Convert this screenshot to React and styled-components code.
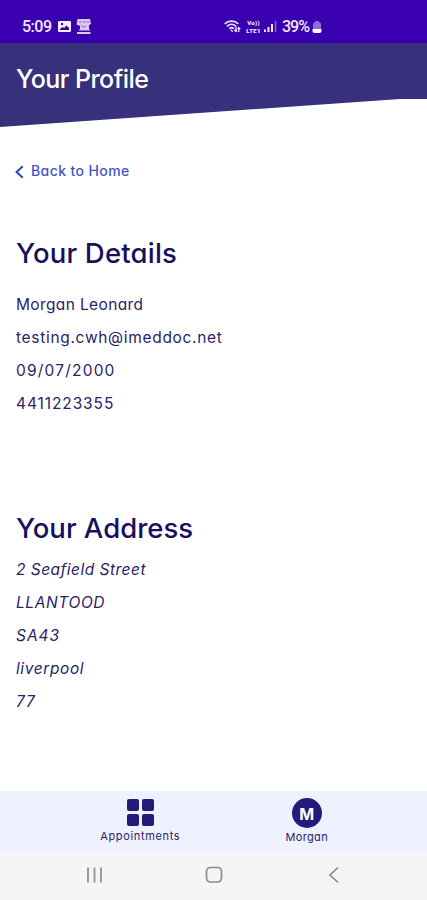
import React from 'react';
import styled, { createGlobalStyle } from 'styled-components';

const GlobalStyle = createGlobalStyle`
  * {
    box-sizing: border-box;
  }

  body {
    margin: 0;
    background: #ffffff;
    font-family: Inter, 'Open Sans', sans-serif;
    font-feature-settings: 'cv11';
    color: #2a2368;
  }

  h1, h2, p, address {
    margin: 0;
  }
`;

const Screen = styled.div`
  display: flex;
  flex-direction: column;
  width: 100%;
  height: 900px;
  overflow: hidden;
  background: #ffffff;
`;

const StatusBar = styled.div`
  display: flex;
  align-items: center;
  justify-content: space-between;
  flex: none;
  height: 43px;
  padding: 10px 105px 0 22px;
  background: #3a00b0;
  color: #f1e9ff;
  font-family: Roboto, sans-serif;
  font-size: 16px;
  font-weight: 500;
  line-height: 20px;

  svg {
    display: block;
    flex: none;
  }
`;

const StatusGroup = styled.div`
  display: flex;
  align-items: center;
  gap: ${({ $gap }) => $gap}px;
`;

const Clock = styled.span`
  width: 31px;
  letter-spacing: -0.5px;
  white-space: nowrap;
`;

const BatteryText = styled.span`
  width: 29px;
  margin-left: 4px;
  letter-spacing: -1px;
  white-space: nowrap;
`;

const Header = styled.header`
  flex: none;
  height: 84px;
  padding: 20px 16px 0;
  background: #37317b;
  clip-path: polygon(0 0, 100% 0, 100% 56px, 400px 56px, 0 100%);
`;

const HeaderTitle = styled.h1`
  font-size: 25px;
  font-weight: 450;
  line-height: 32px;
  letter-spacing: -0.55px;
  color: #ffffff;
`;

const Content = styled.main`
  flex: 1;
  padding: 34px 16px 0 15px;
`;

const BackLink = styled.a`
  display: flex;
  align-items: center;
  gap: 7px;
  height: 20px;
  color: #4154c8;
  font-size: 14px;
  font-weight: 450;
  line-height: 20px;
  letter-spacing: 0.4px;

  svg {
    margin-top: 2px;
  }
`;

const Section = styled.section`
  margin-top: ${({ $top }) => $top}px;
  padding-left: 1px;
`;

const SectionTitle = styled.h2`
  margin-bottom: ${({ $gap }) => $gap}px;
  font-size: 27.5px;
  font-weight: 450;
  line-height: 36px;
  letter-spacing: ${({ $spacing }) => $spacing}px;
  color: #17105f;
`;

const Line = styled.p`
  font-size: 15.5px;
  line-height: 33px;
  letter-spacing: ${({ $spacing }) => $spacing || 0}px;
`;

const Address = styled.address`
  font-style: italic;
`;

const TabBar = styled.nav`
  display: flex;
  flex: none;
  height: 61px;
  padding: 0 37px 0 57px;
  background: #eef1fe;
`;

const Tab = styled.div`
  display: flex;
  flex: 1;
  flex-direction: column;
  align-items: center;
  padding-top: ${({ $top }) => $top}px;
`;

const TabLabel = styled.span`
  margin-top: ${({ $top }) => $top}px;
  font-size: 11px;
  line-height: 14px;
  letter-spacing: ${({ $spacing }) => $spacing}px;
`;

const TileGrid = styled.div`
  display: grid;
  grid-template-columns: 12px 12px;
  grid-auto-rows: 12px;
  gap: 3px;

  span {
    border-radius: 2px;
    background: #231a79;
  }
`;

const Avatar = styled.div`
  display: flex;
  align-items: center;
  justify-content: center;
  width: 30px;
  height: 30px;
  padding-top: 2px;
  border-radius: 50%;
  background: #231a79;
  color: #ffffff;
  font-size: 16px;
  font-weight: 700;
`;

const SystemBar = styled.div`
  display: flex;
  align-items: center;
  justify-content: space-between;
  flex: none;
  height: 48px;
  padding: 0 84px 2px;
  background: #f5f5f5;
`;

const PictureIcon = () => (
  <svg width="13" height="13" viewBox="0 0 13 13">
    <path fill="#f7f0ff" fillRule="evenodd" d="M1.3 1h10.400A1.3 1.3 0 0 1 13 2.300v8.400a1.3 1.3 0 0 1-1.300 1.300H1.300A1.3 1.3 0 0 1 0 10.700V2.300A1.3 1.3 0 0 1 1.300 1ZM2 10h9V8L8.500 5.500 6 8 4.500 7 2 9ZM3 3v2h2V3Z" />
  </svg>
);

const StoreIcon = () => (
  <svg width="16" height="16" viewBox="0 0 16 16" fill="#dfc8f5">
    <path d="M1.500 0h12.500l1 5-2 1v3.500l1 2H3l1-2V7L.5 5.500Z" />
    <path d="M1 13h13.500v2H1Z" />
    <path d="M3 3h2.500M7 3h2.500M11 3h2M5.500 6.500l2.500 2 2-2" stroke="#7a4cc8" fill="none" />
  </svg>
);

const WifiIcon = () => (
  <svg width="17" height="15" viewBox="0 0 17 15" fill="none" stroke="#eee3ff" strokeWidth="1.6">
    <path d="M.7 4.800C4.500 1.200 10.500 1.200 14.300 4.800M3 7.300c2.700-2.500 6.300-2.500 9 0M5.300 9.600c1.500-1.300 3-1.300 4.500 0" />
    <path d="M6.600 10.600 8.800 12.800M12 7.500v5m-1.700-1.700L12 12.500l1-1M14.700 13V8.500m-1 1.500 1-1.500 1.500 1.700" strokeWidth="1.3" />
  </svg>
);

const LteText = styled.div`
  display: flex;
  flex-direction: column;
  align-items: center;
  width: 17px;
  margin: 0 1px 0 3px;
  font-size: 6px;
  font-weight: 900;
  line-height: 7.5px;
  letter-spacing: 0.3px;
  white-space: nowrap;
`;

const SignalIcon = () => (
  <svg width="13" height="13" viewBox="0 0 13 13" fill="#eee3ff">
    <path d="M0 9.500h2V12H0ZM3.500 7h2v5h-2ZM7 4h2v8H7Z" />
    <path d="M10.800 1h1.500v11h-1.500Z" opacity="0.45" />
  </svg>
);

const BatteryIcon = () => (
  <svg width="10" height="14" viewBox="0 0 10 14">
    <path d="M3 1h4v1.200a2 2 0 0 1 2 2V9H1V4.200a2 2 0 0 1 2-2Z" fill="#9169d9" />
    <path d="M.5 9h9v2a2 2 0 0 1-2 2h-5a2 2 0 0 1-2-2Z" fill="#ffffff" />
  </svg>
);

const BackChevron = () => (
  <svg width="9" height="14" viewBox="0 0 9 14" fill="none" stroke="#3044c4" strokeWidth="2">
    <path d="M7.700 1.200 1.600 7l6.100 5.800" />
  </svg>
);

const RecentsIcon = () => (
  <svg width="20" height="18" viewBox="0 0 20 18" stroke="#9b9b9b" strokeWidth="2">
    <path d="M4 1.500v15M10.500 1.500v15M17 1.500v15" />
  </svg>
);

const HomeIcon = () => (
  <svg width="18" height="18" viewBox="0 0 18 18" fill="none" stroke="#8b8b8b" strokeWidth="1.7">
    <rect x="1.500" y="1.500" width="15" height="14.500" rx="4" />
  </svg>
);

const SystemBackIcon = () => (
  <svg width="20" height="18" viewBox="0 0 20 18" fill="none" stroke="#8b8b8b" strokeWidth="1.7">
    <path d="M15 1.500 7 9l8 7.500" />
  </svg>
);

const App = () => {
  const details = [
    { text: 'Morgan Leonard', spacing: 0.37 },
    { text: 'testing.cwh@imeddoc.net', spacing: 0.69 },
    { text: '09/07/2000', spacing: 1.2 },
    { text: '4411223355', spacing: 0.9 }
  ];

  const address = [
    { text: '2 Seafield Street', spacing: 0.48 },
    { text: 'LLANTOOD', spacing: 0.6 },
    { text: 'SA43', spacing: 0.95 },
    { text: 'liverpool', spacing: 0.6 },
    { text: '77', spacing: 0.8 }
  ];

  return (
    <>
      <GlobalStyle />
      <Screen>
        <StatusBar>
          <StatusGroup $gap={5}>
            <Clock>5:09</Clock>
            <PictureIcon />
            <StoreIcon />
          </StatusGroup>
          <StatusGroup $gap={1}>
            <WifiIcon />
            <LteText>
              <span>Vo))</span>
              <span>LTE1</span>
            </LteText>
            <SignalIcon />
            <BatteryText>39%</BatteryText>
            <BatteryIcon />
          </StatusGroup>
        </StatusBar>

        <Header>
          <HeaderTitle>Your Profile</HeaderTitle>
        </Header>

        <Content>
          <BackLink>
            <BackChevron />
            Back to Home
          </BackLink>

          <Section $top={54}>
            <SectionTitle $gap={17} $spacing={0.2}>Your Details</SectionTitle>
            {details.map((line) => (
              <Line key={line.text} $spacing={line.spacing}>{line.text}</Line>
            ))}
          </Section>

          <Section $top={90}>
            <SectionTitle $gap={7} $spacing={0}>Your Address</SectionTitle>
            <Address>
              {address.map((line) => (
                <Line key={line.text} $spacing={line.spacing}>{line.text}</Line>
              ))}
            </Address>
          </Section>
        </Content>

        <TabBar>
          <Tab $top={8}>
            <TileGrid>
              <span />
              <span />
              <span />
              <span />
            </TileGrid>
            <TabLabel $top={3} $spacing={0.65}>Appointments</TabLabel>
          </Tab>
          <Tab $top={7}>
            <Avatar>M</Avatar>
            <TabLabel $top={2} $spacing={0.35}>Morgan</TabLabel>
          </Tab>
        </TabBar>

        <SystemBar>
          <RecentsIcon />
          <HomeIcon />
          <SystemBackIcon />
        </SystemBar>
      </Screen>
    </>
  );
};

export default App;
